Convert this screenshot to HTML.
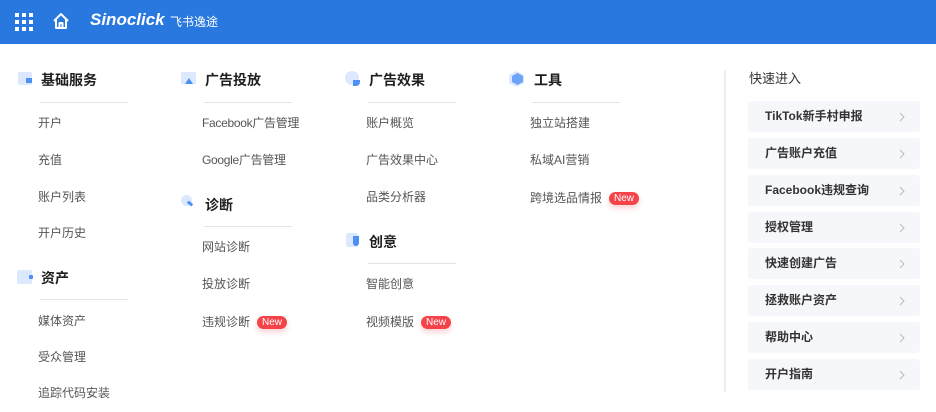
<!DOCTYPE html>
<html><head><meta charset="utf-8"><style>
*{margin:0;padding:0;box-sizing:border-box}
body{width:936px;height:412px;overflow:hidden;background:#fff;font-family:"Liberation Sans","Noto Sans CJK SC",sans-serif;position:relative}
.hdr{position:absolute;left:0;top:0;width:936px;height:44px;background:#2878e0}
.a{position:absolute;white-space:nowrap}
.h{font-size:14px;font-weight:bold;color:#1f1f1f;line-height:16px}
.it{font-size:12px;color:#555;line-height:14px}
.dv{position:absolute;height:1px;background:#e3e3e3;width:88px}
.new{display:inline-block;background:#f5434a;color:#fff;font-size:10px;line-height:13px;height:13px;padding:0 5px;border-radius:7px;margin-left:7px;vertical-align:1px;box-shadow:0 3px 6px rgba(245,67,74,.25)}
.btn{position:absolute;left:748px;width:172px;height:31px;background:#f6f7fa;border-radius:3px;font-size:12px;font-weight:bold;color:#333;line-height:31px;padding-left:17px}
.btn svg{position:absolute;right:15px;top:11px}
</style></head><body>
<div class="hdr">
<svg class="a" style="left:15px;top:13px" width="18" height="18" viewBox="0 0 18 18" fill="#fff">
<rect x="0" y="0" width="4" height="4"/><rect x="7" y="0" width="4" height="4"/><rect x="14" y="0" width="4" height="4"/>
<rect x="0" y="7" width="4" height="4"/><rect x="7" y="7" width="4" height="4"/><rect x="14" y="7" width="4" height="4"/>
<rect x="0" y="14" width="4" height="4"/><rect x="7" y="14" width="4" height="4"/><rect x="14" y="14" width="4" height="4"/></svg>
<svg class="a" style="left:52px;top:12px" width="18" height="18" viewBox="0 0 18 18" fill="none" stroke="#fff" stroke-width="2" stroke-linejoin="round"><path d="M2 9 L9 2 L16 9 M4 7.5 V16 H14 V7.5 M7.5 16 V11 H10.5 V16"/></svg>
<div class="a" style="left:90px;top:10px;color:#fff;font-size:17px;font-weight:bold;font-style:italic">Sinoclick</div>
<div class="a" style="left:170px;top:13px;color:#fff;font-size:12px">飞书逸途</div>
</div>

<div class="a" style="left:18px;top:72px;width:14px;height:13px;background:#dbe8fd;border-radius:2px"><div style="position:absolute;right:0;bottom:2px;width:6px;height:5px;background:#4d8ff5"></div></div>
<div class="a h" style="left:41px;top:72px">基础服务</div>
<div class="dv" style="left:40px;top:102px"></div>
<div class="a it" style="left:38px;top:116px">开户</div>
<div class="a it" style="left:38px;top:153px">充值</div>
<div class="a it" style="left:38px;top:190px">账户列表</div>
<div class="a it" style="left:38px;top:226px">开户历史</div>
<div class="a" style="left:17px;top:270px;width:15px;height:14px;background:#dbe8fd;border-radius:2px"><div style="position:absolute;right:-1px;top:5px;width:4px;height:4px;background:#4d8ff5;border-radius:1px"></div></div>
<div class="a h" style="left:41px;top:270px">资产</div>
<div class="dv" style="left:40px;top:299px"></div>
<div class="a it" style="left:38px;top:314px">媒体资产</div>
<div class="a it" style="left:38px;top:350px">受众管理</div>
<div class="a it" style="left:38px;top:386px">追踪代码安装</div>

<div class="a" style="left:181px;top:72px;width:15px;height:12px;background:#dbe8fd"><div style="position:absolute;left:4px;bottom:0;width:0;height:0;border-left:4px solid transparent;border-right:4px solid transparent;border-bottom:6px solid #4d8ff5"></div></div>
<div class="a h" style="left:205px;top:72px">广告投放</div>
<div class="dv" style="left:204px;top:102px"></div>
<div class="a it" style="left:202px;top:116px;letter-spacing:-0.3px">Facebook广告管理</div>
<div class="a it" style="left:202px;top:153px;letter-spacing:-0.3px">Google广告管理</div>
<div class="a" style="left:181px;top:195px;width:11px;height:11px;background:#dbe8fd;border-radius:50%"><div style="position:absolute;left:6px;top:7px;width:6px;height:3px;background:#4d8ff5;transform:rotate(40deg);border-radius:1px"></div></div>
<div class="a h" style="left:205px;top:197px">诊断</div>
<div class="dv" style="left:204px;top:226px"></div>
<div class="a it" style="left:202px;top:240px">网站诊断</div>
<div class="a it" style="left:202px;top:277px">投放诊断</div>
<div class="a it" style="left:202px;top:315px">违规诊断<span class="new">New</span></div>

<div class="a" style="left:345px;top:71px;width:14px;height:14px;background:#dbe8fd;border-radius:50%"><div style="position:absolute;right:-1px;bottom:-1px;width:7px;height:6px;background:#4d8ff5;border-radius:0 0 4px 0"></div></div>
<div class="a h" style="left:369px;top:72px">广告效果</div>
<div class="dv" style="left:368px;top:102px"></div>
<div class="a it" style="left:366px;top:116px">账户概览</div>
<div class="a it" style="left:366px;top:153px">广告效果中心</div>
<div class="a it" style="left:366px;top:190px">品类分析器</div>
<div class="a" style="left:346px;top:233px;width:12px;height:14px;background:#dbe8fd;border-radius:2px"><div style="position:absolute;right:-1px;top:3px;width:6px;height:10px;background:#4d8ff5;border-radius:0 0 3px 3px"></div></div>
<div class="a h" style="left:369px;top:234px">创意</div>
<div class="dv" style="left:368px;top:263px"></div>
<div class="a it" style="left:366px;top:277px">智能创意</div>
<div class="a it" style="left:366px;top:315px">视频模版<span class="new">New</span></div>

<svg class="a" style="left:509px;top:71px" width="15" height="16" viewBox="0 0 15 16"><path d="M7.5 0 L15 4 V12 L7.5 16 L0 12 V4Z" fill="#dbe8fd"/><path d="M8.5 2 L14 5 V11 L8.5 14 L3 11 V5Z" fill="#6ea4f7"/></svg>
<div class="a h" style="left:534px;top:72px">工具</div>
<div class="dv" style="left:532px;top:102px"></div>
<div class="a it" style="left:530px;top:116px">独立站搭建</div>
<div class="a it" style="left:530px;top:153px">私域AI营销</div>
<div class="a it" style="left:530px;top:191px">跨境选品情报<span class="new">New</span></div>

<div class="a" style="left:724px;top:70px;width:2px;height:322px;background:#eeeeee"></div>
<div class="a" style="left:749px;top:71px;font-size:13px;color:#333;line-height:15px">快速进入</div>
<div class="btn" style="top:101px">TikTok新手村申报<svg width="6" height="10" viewBox="0 0 6 10"><path d="M1 1 L5 5 L1 9" fill="none" stroke="#bbb" stroke-width="1"/></svg></div>
<div class="btn" style="top:138px">广告账户充值<svg width="6" height="10" viewBox="0 0 6 10"><path d="M1 1 L5 5 L1 9" fill="none" stroke="#bbb" stroke-width="1"/></svg></div>
<div class="btn" style="top:175px">Facebook违规查询<svg width="6" height="10" viewBox="0 0 6 10"><path d="M1 1 L5 5 L1 9" fill="none" stroke="#bbb" stroke-width="1"/></svg></div>
<div class="btn" style="top:212px">授权管理<svg width="6" height="10" viewBox="0 0 6 10"><path d="M1 1 L5 5 L1 9" fill="none" stroke="#bbb" stroke-width="1"/></svg></div>
<div class="btn" style="top:248px">快速创建广告<svg width="6" height="10" viewBox="0 0 6 10"><path d="M1 1 L5 5 L1 9" fill="none" stroke="#bbb" stroke-width="1"/></svg></div>
<div class="btn" style="top:285px">拯救账户资产<svg width="6" height="10" viewBox="0 0 6 10"><path d="M1 1 L5 5 L1 9" fill="none" stroke="#bbb" stroke-width="1"/></svg></div>
<div class="btn" style="top:322px">帮助中心<svg width="6" height="10" viewBox="0 0 6 10"><path d="M1 1 L5 5 L1 9" fill="none" stroke="#bbb" stroke-width="1"/></svg></div>
<div class="btn" style="top:359px">开户指南<svg width="6" height="10" viewBox="0 0 6 10"><path d="M1 1 L5 5 L1 9" fill="none" stroke="#bbb" stroke-width="1"/></svg></div>
</body></html>
